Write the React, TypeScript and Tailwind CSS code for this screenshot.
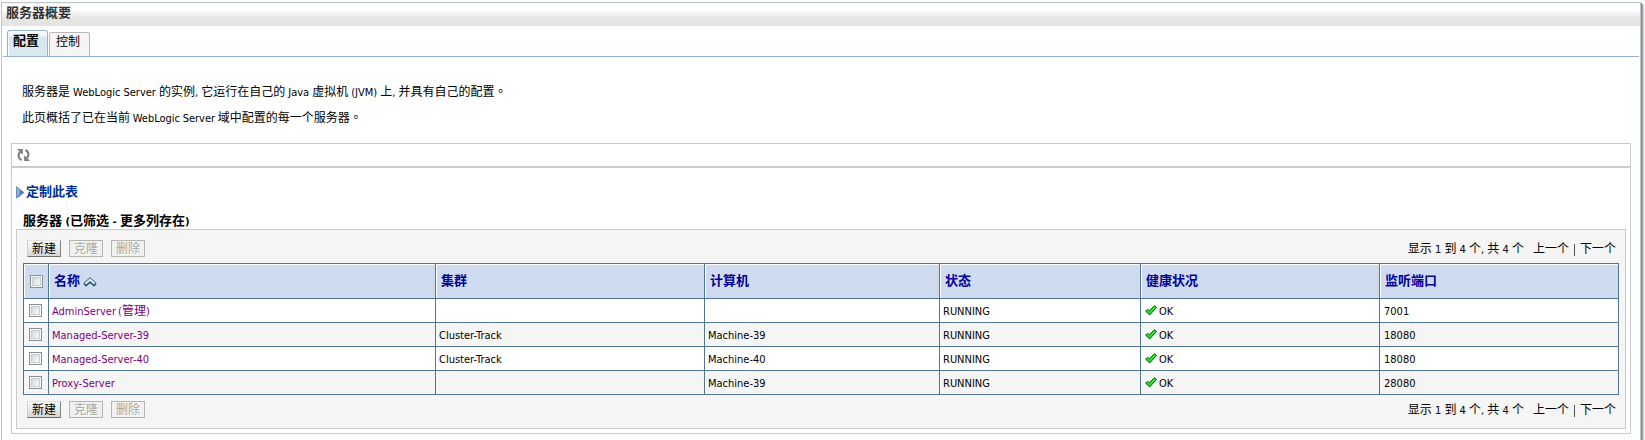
import React from 'react';

const CJK = /([\u4e00-\u9fff]+|\u3002)/;

/** Mixed text: Han runs are set larger than the Latin runs around them. */
function Mixed({ text, bold = false }: { text: string; bold?: boolean }) {
  return (
    <>
      {text.split(CJK).map((part, i) => {
        if (part === '\u3002') {
          return (
            <span key={i} className="font-['Noto_Sans_CJK_TC',sans-serif] text-[12px] leading-none">
              {part}
            </span>
          );
        }
        return i % 2 === 1 ? (
          <span key={i} className={bold ? 'text-[13px] leading-none' : 'text-[12px] leading-none'}>
            {part}
          </span>
        ) : (
          <span key={i}>{part}</span>
        );
      })}
    </>
  );
}

function RefreshIcon() {
  return (
    <svg width="13" height="12" viewBox="0 0 13 12" fill="none" stroke="#777" strokeWidth="2">
      <path d="M4.500 11C1.600 9.600.8 6.600 2.200 4.200L3.800 2" />
      <path d="M.8 .900H5V5" strokeWidth="1.600" />
      <path d="M8.500 1c2.900 1.400 3.700 4.400 2.300 6.800L9.200 10" />
      <path d="M12.200 11.100H8V7" strokeWidth="1.600" />
    </svg>
  );
}

function ExpandIcon() {
  return (
    <svg width="9" height="13" viewBox="0 0 9 13">
      <defs>
        <linearGradient id="expand" x1="0" y1="0" x2="1" y2="0.300">
          <stop offset="0" stopColor="#c3d9f2" />
          <stop offset="1" stopColor="#2d5f9c" />
        </linearGradient>
      </defs>
      <path d="M1.200 2v10.700L8.600 7Z" fill="#b8b8b8" />
      <path d="M.5.800v11L7.500 6.300Z" fill="url(#expand)" stroke="#5a80b0" strokeWidth=".9" />
    </svg>
  );
}

function SortIcon() {
  return (
    <svg width="14" height="10" viewBox="0 0 14 10">
      <path d="M.5 6.500 7 .500 13.500 6.500 11 9.200 7 5.800 3 9.200Z" fill="#a9c3dd" />
      <path d="M.8 6 7 .700 13.200 6" fill="none" stroke="#4c6d90" strokeWidth="1" />
      <path d="M2.500 6.500 7 2.600l4.500 3.900" fill="none" stroke="#e9f1f9" strokeWidth="1.200" />
      <path d="M1 6.500l2 2.200L7 5.200l4 3.500 2-2.200" fill="none" stroke="#24507c" strokeWidth="1.500" />
    </svg>
  );
}

function CheckIcon() {
  return (
    <svg width="12" height="11" viewBox="0 0 12 11">
      <path d="M.7 6.200 2.700 4.400 4.300 5.800 9.500.7 11.500 2.500 4.600 10Z" fill="#16c81a" stroke="#0a6310" strokeWidth="1" />
      <path d="M2.200 5.900 4.400 7.600 10 2" fill="none" stroke="#6cf06a" strokeWidth=".9" />
    </svg>
  );
}

function Checkbox() {
  return (
    <span className="block size-[13px] border border-[#8e8f8f] bg-[#f6f6f6] p-px">
      <span className="block size-[9px] border border-[#c8cbce] bg-linear-to-br from-[#d4d8dc] to-[#f8f8f8]" />
    </span>
  );
}

function Button({ label, disabled = false }: { label: string; disabled?: boolean }) {
  return (
    <button
      disabled={disabled}
      className={
        disabled
          ? 'h-[17px] w-[34px] border border-[#b5b5ad] bg-[#f0f0ee] text-[12px] leading-[14px] text-[#a5a5a0] [text-shadow:1px_1px_0_#fff]'
          : 'h-[17px] w-[34px] border border-t-[#e2e2e2] border-r-[#808080] border-b-[#707070] border-l-[#d0d0d0] bg-linear-to-b from-[#fafafa] to-[#d6d6d4] text-[12px] leading-[14px] text-black'
      }
    >
      {label}
    </button>
  );
}

function Toolbar() {
  return (
    <div className="flex h-[17px] items-center justify-between pr-[9px] pl-[10px]">
      <div className="flex gap-2">
        <Button label="新建" />
        <Button label="克隆" disabled />
        <Button label="删除" disabled />
      </div>
      <div className="flex items-center pt-[2px] whitespace-pre">
        <span><Mixed text="显示 1 到 4 个, 共 4 个" /></span>
        <span className="ml-[9px]"><Mixed text="上一个" /></span>
        <span className="mx-[5px] h-3 w-px bg-[#555]" />
        <span><Mixed text="下一个" /></span>
      </div>
    </div>
  );
}

const GRID = 'grid grid-cols-[25px_387px_269px_235px_201px_239px_239px]';

const rows = [
  { name: 'AdminServer (管理)', cluster: '', machine: '', port: '7001' },
  { name: 'Managed-Server-39', cluster: 'Cluster-Track', machine: 'Machine-39', port: '18080' },
  { name: 'Managed-Server-40', cluster: 'Cluster-Track', machine: 'Machine-40', port: '18080' },
  { name: 'Proxy-Server', cluster: '', machine: 'Machine-39', port: '28080' },
];

const LINES = 'border-t border-l border-[#527597]';
const CELL = `${LINES} flex h-6 items-center pt-[2px] pl-[3px]`;
const HEAD = `${LINES} flex h-[35px] items-center pt-[2px] pl-[5px] font-bold text-[#00009c] shadow-[inset_1px_1px_0_#fff]`;

function ServerTable() {
  return (
    <div className="ml-[6px] w-[1596px] border-r border-b border-[#527597]">
      <div className={`${GRID} bg-[#cfdbee]`}>
        <div className={`${LINES} flex items-center pt-px pl-[6px] shadow-[inset_1px_1px_0_#fff]`}>
          <Checkbox />
        </div>
        <div className={HEAD}>
          <span><Mixed text="名称" bold /></span>
          <span className="ml-[3px] -mt-px"><SortIcon /></span>
        </div>
        {['集群', '计算机', '状态', '健康状况', '监听端口'].map((h) => (
          <div key={h} className={HEAD}>
            <span><Mixed text={h} bold /></span>
          </div>
        ))}
      </div>
      {rows.map((r, i) => (
        <div key={r.name} className={`${GRID} ${i % 2 ? 'bg-[#f5f5f5]' : 'bg-white'}`}>
          <div className={`${LINES} flex h-6 items-center pl-[5px]`}>
            <Checkbox />
          </div>
          <div className={`${CELL} text-[#7d007d] [word-spacing:-1px]`}>
            <span><Mixed text={r.name} /></span>
          </div>
          <div className={CELL}>{r.cluster}</div>
          <div className={CELL}>{r.machine}</div>
          <div className={CELL}>RUNNING</div>
          <div className={`${LINES} flex h-6 items-center pl-1`}>
            <span className="mr-[2px] -mt-px"><CheckIcon /></span>
            <span className="mt-[3px]">OK</span>
          </div>
          <div className={`${LINES} flex h-6 items-center pt-[2px] pl-1`}>{r.port}</div>
        </div>
      ))}
    </div>
  );
}

export default function App() {
  return (
    <div className="h-[440px] w-[1645px] overflow-hidden bg-white pt-[2px] pl-px font-['DejaVu_Sans_Condensed','DejaVu_Sans','Noto_Sans_CJK_SC',sans-serif] text-[11px] leading-[16px] text-black [font-stretch:condensed]">
      <div className="h-[460px] w-[1640px] border border-[#bcc5ca] shadow-[1px_1px_0_#858c8e,2px_2px_0_#a5abad,3px_3px_1px_#d0d0d0]">
        <div className="flex h-[23px] items-center bg-[linear-gradient(#e4e8ea_0,#fff_1px,#fff_8px,#f4f4f4_9px,#f0f0f0_12px,#e8e8e8_14px,#e4e4e2_18px)] pb-px pl-1 font-bold text-[#333]">
          <span><Mixed text="服务器概要" bold /></span>
        </div>
        <div className="mx-px flex h-[31px] items-end border-b border-[#94b2d6] pl-1">
          <div className="h-[26px] w-[41px] rounded-t-[3px] border border-b-0 border-[#94b2d6] bg-[linear-gradient(#f5f9fc_0,#f5f9fc_5px,#d6e6f1_6px,#dce9f3_100%)] pt-[3px] pl-[5px] font-bold shadow-[inset_1px_1px_0_#fff]">
            <Mixed text="配置" bold />
          </div>
          <div className="ml-px h-6 w-[41px] rounded-t-[3px] border border-b-0 border-[#b8b8b8] bg-[#f5f5f5] pt-[2px] pl-[6px]">
            <Mixed text="控制" />
          </div>
        </div>
        <div className="h-[86px] pt-[28px] pl-5">
          <p className="h-[26px] [word-spacing:-0.1px]">
            <Mixed text="服务器是 WebLogic Server 的实例, 它运行在自己的 Java 虚拟机 (JVM) 上, 并具有自己的配置。" />
          </p>
          <p className="[word-spacing:-0.5px]">
            <Mixed text="此页概括了已在当前 WebLogic Server 域中配置的每一个服务器。" />
          </p>
        </div>
        <div className="ml-[9px] h-[291px] w-[1620px] border border-[#cacaca]">
          <div className="flex h-[24px] items-center border-b-2 border-[#cacaca] pl-[5px]">
            <RefreshIcon />
          </div>
          <div className="flex h-[48px] items-center gap-px pl-1 font-bold text-[#003399]">
            <ExpandIcon />
            <span className="pt-px"><Mixed text="定制此表" bold /></span>
          </div>
          <div className="-mt-[3px] h-[16px] pt-px pl-[11px] font-bold">
            <Mixed text="服务器 (已筛选 - 更多列存在)" bold />
          </div>
          <div className="ml-1 h-[200px] w-[1610px] border border-[#cacaca] bg-[#f5f5f5] pt-[10px]">
            <Toolbar />
            <div className="h-[6px]" />
            <ServerTable />
            <div className="h-[6px]" />
            <Toolbar />
          </div>
        </div>
      </div>
    </div>
  );
}
